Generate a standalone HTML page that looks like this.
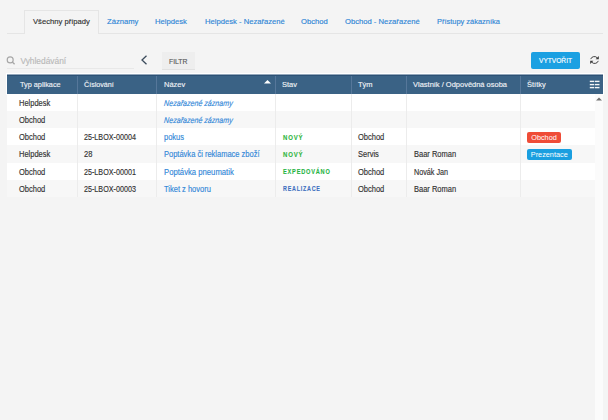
<!DOCTYPE html>
<html><head><meta charset="utf-8">
<style>
*{margin:0;padding:0;box-sizing:border-box}
html,body{width:608px;height:420px;overflow:hidden;background:#f4f4f4;font-family:"Liberation Sans",sans-serif;color:#333}
.a{position:absolute;white-space:nowrap;transform-origin:0 50%;-webkit-text-stroke:0.15px currentColor}
.sx{transform:scaleX(0.91)}
.tabline{position:absolute;left:7px;top:33px;width:596px;height:1px;background:#e5e5e5}
.tabact{position:absolute;left:24px;top:10px;width:75px;height:24px;border:1px solid #e5e5e5;border-bottom:none;background:#f4f4f4}
.tab{font-size:7.9px;transform:scaleX(0.968);color:#2f86d6;top:17px;line-height:10px}
.tabt{font-size:7.9px;transform:scaleX(0.968);color:#333;top:17px;line-height:10px}
.search-ul{position:absolute;left:7px;top:68px;width:127px;height:1px;background:#e8e8e8}
.ph{font-size:8.4px;color:#b9b9b9;left:20.4px;top:55px;line-height:12px}
.filtr{position:absolute;left:161.5px;top:52px;width:33.5px;height:17.5px;background:#eeeeee;border-bottom:1.5px solid #e1e1e1}
.ftext{font-size:7.5px;color:#5a5a5a;transform:scaleX(0.91);left:169px;top:57px;line-height:10px}
.create{position:absolute;left:531px;top:51.5px;width:49px;height:17px;background:#1ba0e2;border-radius:2px}
.ctext{font-size:7.25px;color:#fff;transform:scaleX(0.91);left:538.8px;top:55.5px;line-height:10px}
.tbl{position:absolute;left:6px;top:73px;width:598px;height:22px;background:#fff}
.hdr{position:absolute;left:7px;top:74px;width:596px;height:20px;background:linear-gradient(#93a7bb 0 1px,#2c5175 1px 2px,#3a6285 2px)}
.th{font-size:7.6px;transform:scaleX(0.985);color:#eef1f5;top:80px;line-height:10px}
.row{position:absolute;left:7px;width:588px;height:17px}
.g{background:#f7f7f7}
.w{background:#fff}
.vd{position:absolute;width:1px;background:#ececec;top:94px;height:103px}
.hd{position:absolute;width:1px;background:#56779a;top:76px;height:18px}
.td{font-size:8.25px;transform:scaleX(0.91);color:#333;line-height:10px}
.lk{font-size:8.25px;transform:scaleX(0.91);color:#3388d8;line-height:10px}
.st{font-size:6.6px;font-weight:bold;letter-spacing:0.95px;line-height:10px;transform:scaleX(0.85);-webkit-text-stroke:0.1px currentColor}
.lbl{position:absolute;height:11px;border-radius:2px;color:#fff;font-size:7.3px;line-height:11px;text-align:center}
.sb{position:absolute;left:595px;top:94px;width:8px;height:326px;background:#fbfbfb}
</style></head><body>
<div class="tabline"></div>
<div class="tabact"></div>
<div class="a tabt" style="left:32.6px">Všechny případy</div>
<div class="a tab" style="left:107.3px">Záznamy</div>
<div class="a tab" style="left:155.3px">Helpdesk</div>
<div class="a tab" style="left:205px">Helpdesk - Nezařazené</div>
<div class="a tab" style="left:300.9px">Obchod</div>
<div class="a tab" style="left:345.4px">Obchod - Nezařazené</div>
<div class="a tab" style="left:436.5px;transform:scaleX(0.942)">Přístupy zákazníka</div>

<svg class="a" style="left:6px;top:56px" width="10" height="9" viewBox="0 0 10 9"><circle cx="4.2" cy="3.9" r="3" fill="none" stroke="#a6a6a6" stroke-width="1.15"/><line x1="6.3" y1="6" x2="8.6" y2="8.3" stroke="#a6a6a6" stroke-width="1.3"/></svg>
<div class="a ph">Vyhledávání</div>
<div class="search-ul"></div>
<svg class="a" style="left:140px;top:55px" width="8" height="10" viewBox="0 0 8 10"><polyline points="6.5,0.8 2,5 6.5,9.2" fill="none" stroke="#3b4b5c" stroke-width="1.3"/></svg>
<div class="filtr"></div><div class="a ftext">FILTR</div>
<div class="create"></div><div class="a ctext">VYTVOŘIT</div>
<svg class="a" style="left:589px;top:55px" width="11" height="10" viewBox="0 0 11 10"><path d="M1.7 4.1 A3.9 3.9 0 0 1 8.4 3.0" fill="none" stroke="#3a3a3a" stroke-width="0.95"/><path d="M9.3 5.9 A3.9 3.9 0 0 1 2.6 7.0" fill="none" stroke="#3a3a3a" stroke-width="0.95"/><polygon points="9.8,1.0 9.8,4.2 6.6,4.2" fill="#3a3a3a"/><polygon points="1.2,9.0 1.2,5.8 4.4,5.8" fill="#3a3a3a"/></svg>

<div class="tbl"></div>
<div class="hdr"></div>
<div class="hd" style="left:77px"></div>
<div class="hd" style="left:156px"></div>
<div class="hd" style="left:275px"></div>
<div class="hd" style="left:351px"></div>
<div class="hd" style="left:406px"></div>
<div class="hd" style="left:520px"></div>
<div class="a th" style="left:19.7px;transform:scaleX(0.962)">Typ aplikace</div>
<div class="a th" style="left:84px;transform:scaleX(0.94)">Číslování</div>
<div class="a th" style="left:163.7px">Název</div>
<svg class="a" style="left:264px;top:79.5px" width="7" height="4" viewBox="0 0 7 4"><polygon points="0,3.6 3.5,0 7,3.6" fill="#fff"/></svg>
<div class="a th" style="left:282.4px">Stav</div>
<div class="a th" style="left:358.4px">Tým</div>
<div class="a th" style="left:413.3px">Vlastník / Odpovědná osoba</div>
<div class="a th" style="left:527.4px">Štítky</div>
<svg class="a" style="left:589px;top:80px" width="11" height="9" viewBox="0 0 11 9"><g fill="#f4f6f8"><rect x="0.8" y="0.7" width="4.5" height="1.4"/><rect x="6" y="0.7" width="4.5" height="1.4"/><rect x="0.8" y="3.9" width="4.5" height="1.4"/><rect x="6" y="3.9" width="4.5" height="1.4"/><rect x="0.8" y="6.9" width="4.5" height="1.4"/><rect x="6" y="6.9" width="4.5" height="1.4"/></g></svg>

<div class="row w" style="top:94px"></div>
<div class="row g" style="top:111px"></div>
<div class="row w" style="top:128px"></div>
<div class="row g" style="top:145px;height:18px"></div>
<div class="row w" style="top:163px"></div>
<div class="row g" style="top:180px"></div>
<div class="sb"></div>
<svg class="a" style="left:596px;top:97px" width="6" height="4" viewBox="0 0 6 4"><polygon points="0,3.6 3,0.4 6,3.6" fill="#707070"/></svg>
<div class="vd" style="left:77px"></div>
<div class="vd" style="left:156px"></div>
<div class="vd" style="left:275px"></div>
<div class="vd" style="left:351px"></div>
<div class="vd" style="left:406px"></div>
<div class="vd" style="left:520px"></div>

<div class="a td" style="left:19px;top:99px">Helpdesk</div>
<div class="a lk" style="left:164.2px;top:99px;font-style:italic;transform:scaleX(0.86) skewX(-6deg)">Nezařazené záznamy</div>

<div class="a td" style="left:19px;top:116px">Obchod</div>
<div class="a lk" style="left:164.2px;top:116px;font-style:italic;transform:scaleX(0.86) skewX(-6deg)">Nezařazené záznamy</div>

<div class="a td" style="left:19px;top:133px">Obchod</div>
<div class="a td" style="left:84.3px;top:133px;transform:scaleX(0.87)">25-LBOX-00004</div>
<div class="a lk" style="left:164.2px;top:133px">pokus</div>
<div class="a st" style="left:282.7px;top:133px;color:#2eb540;transform:scaleX(0.91)">NOVÝ</div>
<div class="a td" style="left:358.3px;top:133px">Obchod</div>
<div class="lbl" style="left:527px;top:132px;width:34px;background:#ef4c37">Obchod</div>

<div class="a td" style="left:19px;top:150px">Helpdesk</div>
<div class="a td" style="left:84.3px;top:150px">28</div>
<div class="a lk" style="left:164.2px;top:150px">Poptávka či reklamace zboží</div>
<div class="a st" style="left:282.7px;top:150px;color:#2eb540;transform:scaleX(0.91)">NOVÝ</div>
<div class="a td" style="left:358.3px;top:150px">Servis</div>
<div class="a td" style="left:413.5px;top:150px">Baar Roman</div>
<div class="lbl" style="left:527px;top:149px;width:44.5px;background:#1a9fe0">Prezentace</div>

<div class="a td" style="left:19px;top:168px">Obchod</div>
<div class="a td" style="left:84.3px;top:168px;transform:scaleX(0.87)">25-LBOX-00001</div>
<div class="a lk" style="left:164.2px;top:168px;transform:scaleX(0.934)">Poptávka pneumatik</div>
<div class="a st" style="left:282.7px;top:167px;color:#25b443">EXPEDOVÁNO</div>
<div class="a td" style="left:358.3px;top:168px">Obchod</div>
<div class="a td" style="left:413.5px;top:168px;transform:scaleX(0.875)">Novák Jan</div>

<div class="a td" style="left:19px;top:185px">Obchod</div>
<div class="a td" style="left:84.3px;top:185px;transform:scaleX(0.87)">25-LBOX-00003</div>
<div class="a lk" style="left:164.2px;top:185px">Tiket z hovoru</div>
<div class="a st" style="left:282.7px;top:184px;color:#3d6fbf;transform:scaleX(0.815)">REALIZACE</div>
<div class="a td" style="left:358.3px;top:185px">Obchod</div>
<div class="a td" style="left:413.5px;top:185px">Baar Roman</div>
</body></html>
